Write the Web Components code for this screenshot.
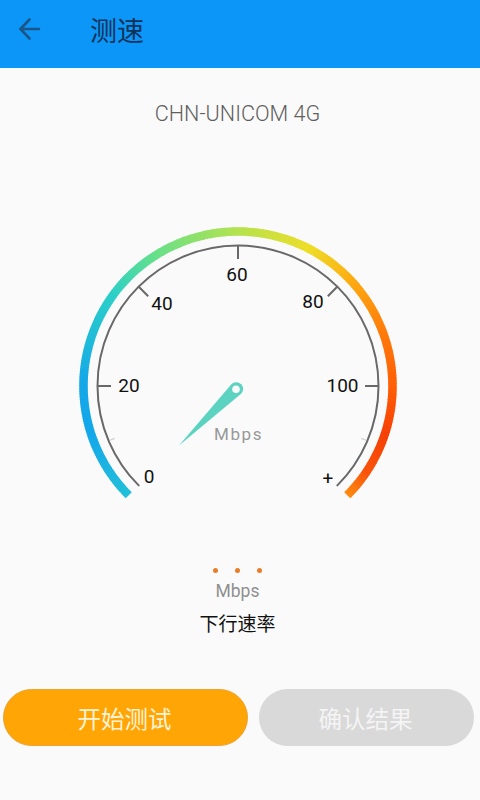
<!DOCTYPE html>
<html lang="zh">
<head>
<meta charset="utf-8">
<title>测速</title>
<style>
  html, body { margin: 0; height: 100%; background: #fafafa; }
  body { font-family: Roboto, "Noto Sans CJK SC", sans-serif; }
</style>
</head>
<body>
<speed-page>
  <app-header slot="header">测速</app-header>
  <speed-gauge slot="gauge" network="CHN-UNICOM 4G"></speed-gauge>
  <speed-readout slot="readout" unit="Mbps">下行速率</speed-readout>
  <pill-button slot="actions" kind="primary">开始测试</pill-button>
  <pill-button slot="actions" kind="disabled">确认结果</pill-button>
</speed-page>

<script>
class SpeedPage extends HTMLElement {
	constructor() {
		super();
		this.attachShadow({ mode: "open" });
		this.shadowRoot.innerHTML = `
      <style>
        :host {
          display: flex;
          flex-direction: column;
          width: 480px;
          height: 800px;
          background: #fafafa;
          overflow: hidden;
        }
        .actions {
          display: flex;
          gap: 11px;
          padding: 0 6px 0 3px;
          margin-top: 52px;
        }
      </style>
      <slot name="header"></slot>
      <slot name="gauge"></slot>
      <slot name="readout"></slot>
      <div class="actions"><slot name="actions"></slot></div>
    `;
	}
}

class AppHeader extends HTMLElement {
	constructor() {
		super();
		this.attachShadow({ mode: "open" });
		this.shadowRoot.innerHTML = `
      <style>
        :host {
          display: flex;
          align-items: center;
          height: 68px;
          flex: none;
          background: #0c97f8;
          color: #0e3258;
        }
        svg {
          width: 24px;
          height: 24px;
          margin: 0 0 10px 18px;
          flex: none;
        }
        .title {
          margin-left: 48px;
          padding-bottom: 8px;
          font: 400 27px/36px "Noto Sans CJK SC", sans-serif;
        }
      </style>
      <svg viewBox="0 0 24 24" fill="none" stroke="#1a5688" stroke-width="2.6" stroke-linecap="round" stroke-linejoin="round" aria-hidden="true">
        <path d="M2.5 12H21"></path>
        <path d="M11.5 2.5L2.5 12l9 9.5"></path>
      </svg>
      <span class="title"><slot></slot></span>
    `;
	}
}

// colour stops along the dial, 0 = bottom left end, 1 = bottom right end
const ARC_STOPS = [
	[0, "#22c0d8"], [0.1, "#14a8ea"], [0.17, "#14a8e8"], [0.3, "#2cd0c8"],
	[0.38, "#66e08a"], [0.5, "#b4e24e"], [0.6, "#eede28"], [0.67, "#fdae12"],
	[0.76, "#ff7a0a"], [0.84, "#ff5c06"], [0.9, "#f64006"], [0.96, "#f9540a"], [1, "#ff8c10"],
];
const LABELS = [
	["0", 149, 477], ["20", 129, 386], ["40", 162, 304], ["60", 237, 275],
	["80", 313, 302], ["100", 342.5, 386], ["+", 328, 479],
];
const CX = 238;
const CY = 176;

function polar(r, t) {
	const a = ((225 - 270 * t) * Math.PI) / 180;
	return [CX + r * Math.cos(a), CY - r * Math.sin(a)];
}

function arcColor(t) {
	const hex = (c) => [1, 3, 5].map((i) => parseInt(c.substr(i, 2), 16));
	for (let i = 1; i < ARC_STOPS.length; i++) {
		const [t1, c1] = ARC_STOPS[i];
		if (t <= t1) {
			const [t0, c0] = ARC_STOPS[i - 1];
			const k = (t - t0) / (t1 - t0);
			const a = hex(c0);
			const b = hex(c1);
			return `rgb(${a.map((v, n) => Math.round(v + (b[n] - v) * k)).join(",")})`;
		}
	}
	return ARC_STOPS[ARC_STOPS.length - 1][1];
}

class SpeedGauge extends HTMLElement {
	constructor() {
		super();
		this.attachShadow({ mode: "open" });
		this.shadowRoot.innerHTML = `
      <style>
        :host {
          display: block;
          flex: none;
          color: #111;
        }
        .network {
          height: 142px;
          box-sizing: border-box;
          padding-top: 32px;
          padding-right: 5px;
          text-align: center;
          font: 300 21.6px/28px Roboto, sans-serif;
          color: #5f5f5f;
        }
        .dial {
          position: relative;
          width: 480px;
          height: 300px;
        }
        svg {
          display: block;
        }
        .label {
          position: absolute;
          transform: translate(-50%, -50%);
          font: 400 19px/24px Roboto, sans-serif;
          white-space: nowrap;
        }
        .unit {
          position: absolute;
          left: 238.5px;
          top: 224px;
          transform: translate(-50%, -50%);
          font: 400 17px/20px Roboto, sans-serif;
          letter-spacing: 1.6px;
          color: #989898;
        }
      </style>
      <div class="network"></div>
      <div class="dial">
        <svg width="480" height="300" viewBox="0 0 480 300" fill="none" aria-hidden="true"></svg>
        <span class="unit">Mbps</span>
      </div>
    `;
	}

	connectedCallback() {
		const root = this.shadowRoot;
		root.querySelector(".network").textContent = this.getAttribute("network") || "";
		root.querySelector("svg").innerHTML = this.#drawDial();
		const dial = root.querySelector(".dial");
		LABELS.forEach(([text, x, y]) => {
			const span = document.createElement("span");
			span.className = "label";
			span.textContent = text;
			span.style.left = x + "px";
			span.style.top = y - 210 + "px";
			dial.appendChild(span);
		});
	}

	#drawDial() {
		let out = "";
		const steps = 270;
		for (let i = 0; i < steps; i++) {
			const t0 = i / steps;
			const t1 = Math.min(1, (i + 1.3) / steps);
			const [x0, y0] = polar(154.5, t0);
			const [x1, y1] = polar(154.5, t1);
			out += `<path d="M${x0.toFixed(2)} ${y0.toFixed(2)}A154.5 154.5 0 0 1 ${x1.toFixed(2)} ${y1.toFixed(2)}" stroke="${arcColor((i + 0.5) / steps)}" stroke-width="8.5"/>`;
		}
		const [ax, ay] = polar(140.5, 0);
		const [bx, by] = polar(140.5, 1);
		out += `<path d="M${ax} ${ay}A140.5 140.5 0 1 1 ${bx} ${by}" stroke="#686868" stroke-width="2" stroke-linecap="round"/>`;
		for (let i = 1; i <= 5; i++) {
			const t = i / 6;
			const [x0, y0] = polar(141, t);
			const [x1, y1] = polar(127, t);
			out += `<path d="M${x0} ${y0}L${x1} ${y1}" stroke="#686868" stroke-width="2"/>`;
		}
		// the two faint minor ticks
		[0.0815, 0.9185].forEach((t) => {
			const [x0, y0] = polar(139, t);
			const [x1, y1] = polar(134, t);
			out += `<path d="M${x0} ${y0}L${x1} ${y1}" stroke="#cfcfcf" stroke-width="1.2"/>`;
		});
		// needle, y is 210 less than on the page
		out += `<path d="M179 235.5L231.2 174.5A6.8 6.8 0 1 1 240.8 184.1Z" fill="#5bd3c0"/>`;
		out += `<circle cx="236" cy="179.3" r="3.8" fill="#fafafa"/>`;
		return out;
	}
}

class SpeedReadout extends HTMLElement {
	constructor() {
		super();
		this.attachShadow({ mode: "open" });
		this.shadowRoot.innerHTML = `
      <style>
        :host {
          display: block;
          flex: none;
          padding: 58px 5px 0 0;
          text-align: center;
        }
        .dots {
          display: flex;
          justify-content: center;
          gap: 17px;
        }
        .dots i {
          width: 5px;
          height: 5px;
          border-radius: 50%;
          background: #e87d2a;
        }
        .unit {
          margin-top: 7px;
          font: 400 17.5px/22px Roboto, sans-serif;
          color: #8f8f8f;
        }
        .name {
          margin-top: 7px;
          font: 400 19px/28px "Noto Sans CJK SC", sans-serif;
          color: #111;
        }
      </style>
      <div class="dots"><i></i><i></i><i></i></div>
      <div class="unit"></div>
      <div class="name"><slot></slot></div>
    `;
	}

	connectedCallback() {
		this.shadowRoot.querySelector(".unit").textContent = this.getAttribute("unit") || "";
	}
}

class PillButton extends HTMLElement {
	constructor() {
		super();
		this.attachShadow({ mode: "open" });
		this.shadowRoot.innerHTML = `
      <style>
        :host {
          display: flex;
          align-items: center;
          justify-content: center;
          box-sizing: border-box;
          height: 57px;
          padding-right: 2px;
          border-radius: 29px;
          font: 400 23.5px/32px "Noto Sans CJK SC", sans-serif;
        }
        :host([kind="primary"]) {
          width: 245px;
          background: #ffa505;
          border: 1px solid #eda232;
          color: #fff3d6;
        }
        :host([kind="disabled"]) {
          width: 215px;
          background: #d9d9d9;
          color: #f4f4f4;
        }
      </style>
      <slot></slot>
    `;
	}
}

customElements.define("speed-page", SpeedPage);
customElements.define("app-header", AppHeader);
customElements.define("speed-gauge", SpeedGauge);
customElements.define("speed-readout", SpeedReadout);
customElements.define("pill-button", PillButton);
</script>
</body>
</html>
